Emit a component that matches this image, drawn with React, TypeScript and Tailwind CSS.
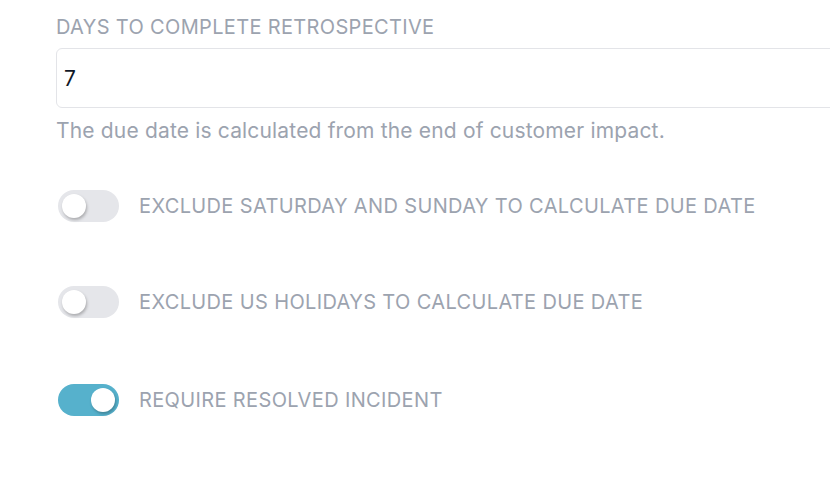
import { useState } from 'react'

function Toggle({ on, onChange }: { on: boolean; onChange: () => void }) {
  return (
    <button
      onClick={onChange}
      className={`relative w-[61px] h-8 rounded-full shrink-0 flex items-center px-1 ${on ? 'bg-[#56b1cc] justify-end' : 'bg-[#e5e6ea] justify-start'}`}
    >
      <span className="block w-6 h-6 rounded-full bg-white shadow-[1px_2px_3px_rgba(0,0,0,0.25)]" />
    </button>
  )
}

export default function App() {
  const [days, setDays] = useState('7')
  const [weekend, setWeekend] = useState(false)
  const [holidays, setHolidays] = useState(false)
  const [resolved, setResolved] = useState(true)

  const rows = [
    { label: 'EXCLUDE SATURDAY AND SUNDAY TO CALCULATE DUE DATE', on: weekend, toggle: () => setWeekend(v => !v), mt: 'mt-[45px]' },
    { label: 'EXCLUDE US HOLIDAYS TO CALCULATE DUE DATE', on: holidays, toggle: () => setHolidays(v => !v), mt: 'mt-16' },
    { label: 'REQUIRE RESOLVED INCIDENT', on: resolved, toggle: () => setResolved(v => !v), mt: 'mt-[66px]' },
  ]

  return (
    <div className="w-[830px] h-[488px] bg-white overflow-hidden pl-14 pt-[14px]" style={{ fontFamily: 'Inter, "Noto Sans", sans-serif' }}>
      <label className="block text-[20px] leading-[26px] text-[#9ca3af] tracking-[0.017em]">DAYS TO COMPLETE RETROSPECTIVE</label>
      <input
        value={days}
        onChange={e => setDays(e.target.value)}
        className="mt-2 block w-[800px] h-[60px] border border-[#e3e4e8] rounded-md pl-[7px] text-[21px] text-[#111827] outline-none"
      />
      <p className="mt-[9px] text-[21px] leading-[28px] text-[#9ca3af] tracking-[0.008em]">The due date is calculated from the end of customer impact.</p>

      {rows.map(r => (
        <div key={r.label} className={`${r.mt} flex items-center gap-5 pl-[2px] h-8`}>
          <Toggle on={r.on} onChange={r.toggle} />
          <span className="text-[20px] leading-[26px] text-[#9ca3af] tracking-[0.018em]">{r.label}</span>
        </div>
      ))}
    </div>
  )
}
